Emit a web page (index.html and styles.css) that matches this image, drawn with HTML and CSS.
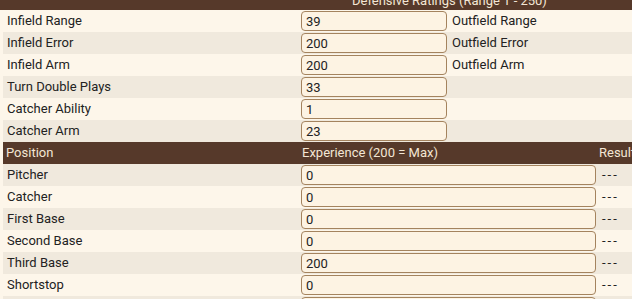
FILE: index.html
```html
<!DOCTYPE html>
<html>
<head>
<meta charset="utf-8">
<link rel="stylesheet" href="styles.css">
</head>
<body>
<div class="page">
  <div class="caption"><span>Defensive Ratings (Range 1 - 250)</span></div>
  <div class="grid def">
    <div class="cell lab light">Infield Range</div>
    <div class="cell inp light"><input class="field short" value="39" autofocus></div>
    <div class="cell lab2 light">Outfield Range</div>

    <div class="cell lab dark">Infield Error</div>
    <div class="cell inp dark"><input class="field short" value="200"></div>
    <div class="cell lab2 dark">Outfield Error</div>

    <div class="cell lab light">Infield Arm</div>
    <div class="cell inp light"><input class="field short" value="200"></div>
    <div class="cell lab2 light">Outfield Arm</div>

    <div class="cell lab dark">Turn Double Plays</div>
    <div class="cell inp dark"><input class="field short" value="33"></div>
    <div class="cell lab2 dark"></div>

    <div class="cell lab light">Catcher Ability</div>
    <div class="cell inp light"><input class="field short" value="1"></div>
    <div class="cell lab2 light"></div>

    <div class="cell lab dark">Catcher Arm</div>
    <div class="cell inp dark"><input class="field short" value="23"></div>
    <div class="cell lab2 dark"></div>
  </div>

  <div class="grid exp">
    <div class="cell head h1">Position</div>
    <div class="cell head h2">Experience (200 = Max)</div>
    <div class="cell head h3">Result</div>

    <div class="cell lab dark">Pitcher</div>
    <div class="cell inp dark"><input class="field long" value="0"></div>
    <div class="cell res dark">---</div>

    <div class="cell lab light">Catcher</div>
    <div class="cell inp light"><input class="field long" value="0"></div>
    <div class="cell res light">---</div>

    <div class="cell lab dark">First Base</div>
    <div class="cell inp dark"><input class="field long" value="0"></div>
    <div class="cell res dark">---</div>

    <div class="cell lab light">Second Base</div>
    <div class="cell inp light"><input class="field long" value="0"></div>
    <div class="cell res light">---</div>

    <div class="cell lab dark">Third Base</div>
    <div class="cell inp dark"><input class="field long" value="200"></div>
    <div class="cell res dark">---</div>

    <div class="cell lab light">Shortstop</div>
    <div class="cell inp light"><input class="field long" value="0"></div>
    <div class="cell res light">---</div>

    <div class="cell lab dark"></div>
    <div class="cell inp dark"><input class="field long" value=""></div>
    <div class="cell res dark"></div>
  </div>
</div>
</body>
</html>
```

FILE: styles.css
```css
html, body {
  margin: 0;
  padding: 0;
  background: #fdf6ea;
  overflow: hidden;
}
body {
  font-family: Roboto, "Noto Sans", sans-serif;
  font-size: 13px;
  color: #222;
  width: 632px;
  height: 299px;
}
.page {
  width: 800px;
}
.caption {
  height: 10px;
  overflow: hidden;
  background: #56392a;
  color: #f3e6d4;
}
.caption span {
  display: block;
  line-height: 22px;
  margin-top: -10px;
  padding-left: 352px;
}
.grid {
  display: grid;
  margin-left: 3px;
}
.def {
  grid-template-columns: 296px 150px 1fr;
}
.exp {
  grid-template-columns: 296px 299px 1fr;
}
.cell {
  height: 22px;
  line-height: 22px;
  white-space: nowrap;
  overflow: hidden;
  display: flex;
  align-items: center;
}
.light { background: #fdf6ea; }
.dark { background: #f0e9dd; }
.lab { padding-left: 4px; }
.lab2 { padding-left: 3px; }
.res { padding-left: 4px; letter-spacing: 2px; }
.inp { padding-left: 2px; }
.head {
  background: #56392a;
  color: #f3e6d4;
}
.h1 { padding-left: 3px; }
.h2 { padding-left: 3px; }
.h3 { padding-left: 1px; }
.field {
  box-sizing: border-box;
  height: 20px;
  margin: 0;
  padding: 0 4px;
  border: 1px solid #a4835e;
  border-radius: 4px;
  background: #fdf3e3;
  font-family: Roboto, "Noto Sans", sans-serif;
  font-size: 13px;
  color: #222;
  caret-color: #222;
}
.field:focus { outline: none; }
.short { width: 146px; }
.long { width: 295px; }
```
